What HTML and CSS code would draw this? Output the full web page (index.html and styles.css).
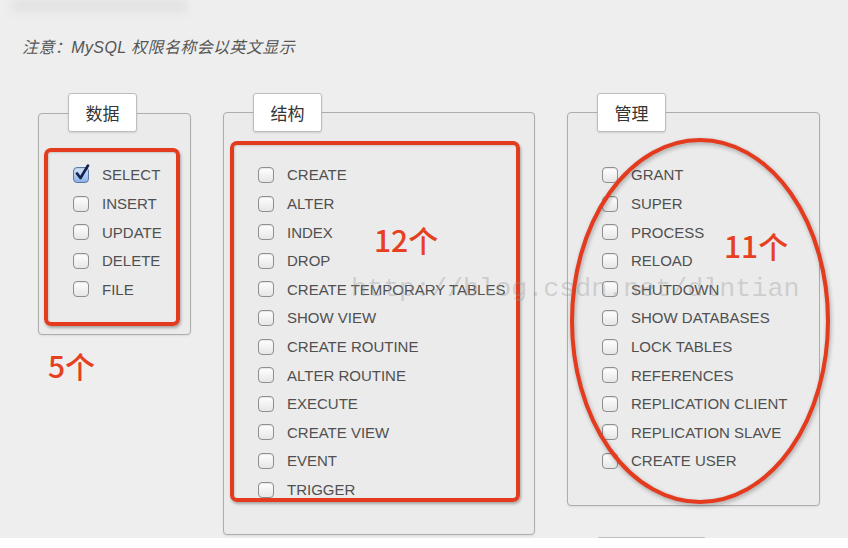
FILE: index.html
```html
<!DOCTYPE html>
<html lang="zh">
<head>
<meta charset="utf-8">
<title>MySQL 权限</title>
<link rel="stylesheet" href="styles.css">
</head>
<body>
<div class="page">
  <div class="topbar"></div>
  <p class="note">注意：MySQL 权限名称会以英文显示</p>
  <div class="groups">
    <div class="col">
      <div class="group g1">
        <div class="legend">数据</div>
        <ul class="privs">
          <li><span class="cb checked"><svg viewBox="0 0 18 18" width="18" height="18"><path d="M4 9.5 L7.5 14 L15 1.5" fill="none" stroke="#14214d" stroke-width="2.6" stroke-linecap="round" stroke-linejoin="round"/></svg></span>SELECT</li>
          <li><span class="cb"></span>INSERT</li>
          <li><span class="cb"></span>UPDATE</li>
          <li><span class="cb"></span>DELETE</li>
          <li><span class="cb"></span>FILE</li>
        </ul>
        <div class="redbox box1"></div>
      </div>
      <div class="count c5">5个</div>
    </div>
    <div class="col">
      <div class="group g2">
        <div class="legend">结构</div>
        <ul class="privs">
          <li><span class="cb"></span>CREATE</li>
          <li><span class="cb"></span>ALTER</li>
          <li><span class="cb"></span>INDEX</li>
          <li><span class="cb"></span>DROP</li>
          <li><span class="cb"></span>CREATE TEMPORARY TABLES</li>
          <li><span class="cb"></span>SHOW VIEW</li>
          <li><span class="cb"></span>CREATE ROUTINE</li>
          <li><span class="cb"></span>ALTER ROUTINE</li>
          <li><span class="cb"></span>EXECUTE</li>
          <li><span class="cb"></span>CREATE VIEW</li>
          <li><span class="cb"></span>EVENT</li>
          <li><span class="cb"></span>TRIGGER</li>
        </ul>
        <div class="redbox box2"></div>
        <div class="count c12">12个</div>
      </div>
    </div>
    <div class="col">
      <div class="group g3">
        <div class="legend">管理</div>
        <ul class="privs">
          <li><span class="cb"></span>GRANT</li>
          <li><span class="cb"></span>SUPER</li>
          <li><span class="cb"></span>PROCESS</li>
          <li><span class="cb"></span>RELOAD</li>
          <li><span class="cb"></span>SHUTDOWN</li>
          <li><span class="cb"></span>SHOW DATABASES</li>
          <li><span class="cb"></span>LOCK TABLES</li>
          <li><span class="cb"></span>REFERENCES</li>
          <li><span class="cb"></span>REPLICATION CLIENT</li>
          <li><span class="cb"></span>REPLICATION SLAVE</li>
          <li><span class="cb"></span>CREATE USER</li>
        </ul>
        <svg class="ellipse" viewBox="0 0 266 372" width="266" height="372"><ellipse cx="133" cy="186" rx="128" ry="181" fill="none" stroke="#e43a1e" stroke-width="4"/></svg>
        <div class="count c11">11个</div>
      </div>
      <div class="legend next"></div>
    </div>
  </div>
  <div class="watermark">http://blog.csdn.net/dlntian</div>
</div>
</body>
</html>
```

FILE: styles.css
```css
html, body {
  margin: 0;
  padding: 0;
  background: #ffffff;
}
.page {
  position: relative;
  height: 538px;
  background: #eeeeee;
  font-family: "Liberation Sans", "Noto Sans CJK SC", sans-serif;
}
.topbar {
  width: 175px;
  height: 12px;
  margin-left: 12px;
  background: #e2e2e2;
  filter: blur(4px);
}
.note {
  margin: 26px 0 0 22px;
  line-height: 20px;
  font-size: 16px;
  font-style: italic;
  letter-spacing: 0.4px;
  color: #555555;
  font-family: "Liberation Sans", "Noto Sans CJK SC", sans-serif;
}
.groups {
  display: flex;
  align-items: flex-start;
  gap: 32px;
  padding-left: 38px;
  margin-top: 54px;
}
.col {
  display: flex;
  flex-direction: column;
}
.group {
  position: relative;
  box-sizing: border-box;
  border: 1px solid #adadad;
  border-radius: 4px;
  background: #ebebeb;
  box-shadow: 0 1px 2px rgba(0,0,0,0.08);
  padding: 0 0 30px 34px;
}
.g1 { width: 153px; margin-top: 1px; }
.g2 { width: 312px; }
.g3 { width: 253px; }
.legend {
  box-sizing: border-box;
  width: 69px;
  height: 39px;
  margin: -20px 0 0 -5px;
  background: #ffffff;
  border: 1px solid #bdbdbd;
  border-radius: 3px;
  box-shadow: 0 1px 2px rgba(0,0,0,0.12);
  display: flex;
  align-items: center;
  justify-content: center;
  font-family: "Noto Sans CJK SC", sans-serif;
  font-size: 17px;
  color: #333333;
}
.legend.next {
  width: 109px;
  height: 12px;
  margin: 31px 0 0 30px;
  border-bottom: none;
  border-radius: 3px 3px 0 0;
}
.g1 .legend { margin-top: -21px; }
.privs {
  list-style: none;
  margin: 28.7px 0 0 0;
  padding: 0;
}
.privs li {
  display: flex;
  align-items: center;
  height: 28.6px;
  font-size: 15px;
  color: #505050;
  white-space: nowrap;
}
.cb {
  box-sizing: border-box;
  width: 16px;
  height: 16px;
  margin-right: 13px;
  border: 1px solid #8f8f8f;
  border-radius: 4px;
  background: linear-gradient(#ffffff, #e6e6e6);
  box-shadow: inset 0 1px 1px rgba(0,0,0,0.1);
  flex: none;
  position: relative;
}
.cb.checked {
  border-color: #5a78a8;
  background: linear-gradient(#d4e4fa, #8fb3e6);
}
.cb.checked svg {
  position: absolute;
  left: -1px;
  top: -4px;
}
.redbox {
  position: absolute;
  box-sizing: border-box;
  border: 4px solid #e43a1e;
  border-radius: 7px;
  box-shadow: 1px 2px 3px rgba(0,0,0,0.3), inset 1px 1px 2px rgba(0,0,0,0.15);
}
.box1 { left: 5px; top: 34px; width: 136px; height: 178px; }
.box2 { left: 6px; top: 28px; width: 290px; height: 361px; }
.ellipse {
  position: absolute;
  left: -1px;
  top: 22px;
  filter: drop-shadow(1px 2px 2px rgba(0,0,0,0.3));
}
.count {
  font-family: "Noto Sans CJK SC", sans-serif;
  font-weight: 500;
  font-size: 30px;
  line-height: 36px;
  color: #e6401f;
}
.c5 { margin: 12px 0 0 10px; }
.c12 { position: absolute; left: 150px; top: 108px; }
.c11 { position: absolute; left: 156px; top: 114px; }
.watermark {
  position: absolute;
  left: 351px;
  top: 272px;
  font-family: "Liberation Mono", monospace;
  font-size: 26.7px;
  line-height: 34px;
  color: rgba(150,150,150,0.35);
  pointer-events: none;
}
```
